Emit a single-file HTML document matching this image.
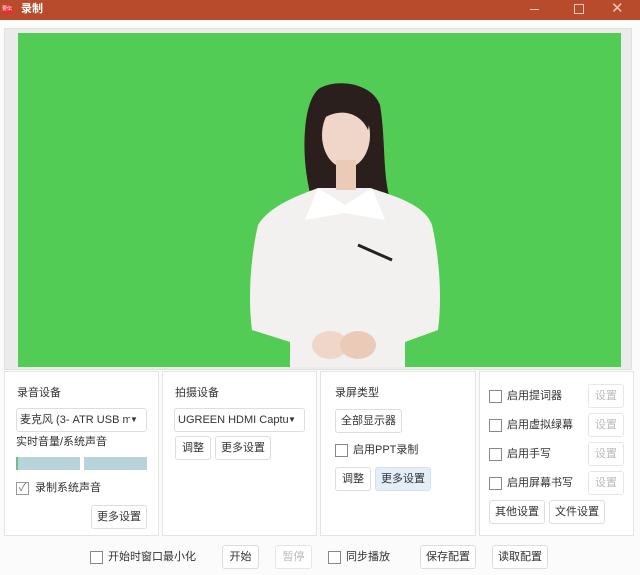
<!DOCTYPE html>
<html><head><meta charset="utf-8"><style>
*{margin:0;padding:0;box-sizing:border-box}
body{width:640px;height:575px;background:#fbfbfb;font-family:"Liberation Sans","Noto Sans CJK SC",sans-serif;font-size:11px;color:#333;position:relative;overflow:hidden}
.a{position:absolute}
.tb{left:0;top:0;width:640px;height:20px;background:#b84b2c}
.panel{position:absolute;top:371px;height:165px;border:1px solid #e4e4e4;background:#fff}
.btn{position:absolute;border:1px solid #ddd;border-radius:3px;background:#fff;height:24px;line-height:22px;text-align:center;font-size:11px;color:#333}
.dis{color:#bbb;border-color:#e6e6e6}
.cb{position:absolute;width:13px;height:13px;border:1px solid #888;background:#fff}
.t{position:absolute;font-size:11px;white-space:nowrap;line-height:13px}
</style></head><body>
<div class="a tb"></div>
<div class="a" style="left:2px;top:5px;width:11px;height:9px;background:#d33;font-size:5px;color:#fff;line-height:9px">要伝</div>
<div class="t" style="left:21px;top:3px;color:#fff;font-weight:bold;font-size:11px">录制</div>
<div class="a" style="left:530px;top:9px;width:9px;height:1px;background:#f3c9b8"></div>
<div class="a" style="left:574px;top:4px;width:10px;height:10px;border:1px solid #f3c9b8"></div>
<div class="t" style="left:611px;top:2px;color:#f3c9b8;font-size:15px">✕</div>

<div class="a" style="left:4px;top:28px;width:628px;height:342px;background:#ebebeb;border:1px solid #e0e0e0"></div>
<div class="a" style="left:18px;top:33px;width:603px;height:334px;background:#52cc55;overflow:hidden">
<svg width="603" height="334" viewBox="18 33 603 334">
<path d="M312 200 C300 160 302 100 320 88 C340 78 372 84 380 105 C386 140 382 180 392 205 L375 205 L315 205 Z" fill="#2a1f1c"/>
<path d="M258 225 C270 205 300 195 318 188 L370 188 C395 196 425 205 432 225 C440 260 442 300 438 330 L405 342 L405 367 L290 367 L290 342 L252 330 C248 300 250 260 258 225 Z" fill="#f3f1ef"/>
<path d="M318 188 L345 205 L372 188 L385 220 L345 213 L305 220 Z" fill="#fff"/>
<ellipse cx="346" cy="135" rx="24" ry="33" fill="#f0d6c8"/>
<rect x="336" y="160" width="20" height="30" fill="#eccab8"/>
<path d="M318 98 C330 88 365 90 372 110 L368 130 C360 112 340 108 324 118 Z" fill="#2a1f1c"/>
<path d="M358 245 L392 260" stroke="#222" stroke-width="3"/>
<ellipse cx="330" cy="345" rx="18" ry="14" fill="#f0d6c8"/>
<ellipse cx="358" cy="345" rx="18" ry="14" fill="#eccab8"/>
</svg></div>

<div class="panel" style="left:4px;width:155px"></div>
<div class="panel" style="left:162px;width:155px"></div>
<div class="panel" style="left:320px;width:156px"></div>
<div class="panel" style="left:479px;width:155px"></div>

<div class="t" style="left:17px;top:387px">录音设备</div>
<div class="btn" style="left:16px;top:408px;width:131px;text-align:left;padding-left:3px;overflow:hidden">麦克风 (3- ATR USB mic<span style="position:absolute;right:0;background:#fff;width:16px;font-size:8px">▼</span></div>
<div class="t" style="left:16px;top:436px">实时音量/系统声音</div>
<div class="a" style="left:16px;top:457px;width:64px;height:13px;background:#b9d3da;border-left:2px solid #6cbf8a"></div>
<div class="a" style="left:84px;top:457px;width:63px;height:13px;background:#b9d3da"></div>
<div class="cb" style="left:16px;top:482px;border-color:#999;font-size:11px;line-height:11px;color:#777;text-align:center">✓</div>
<div class="t" style="left:35px;top:482px">录制系统声音</div>
<div class="btn" style="left:91px;top:505px;width:56px">更多设置</div>

<div class="t" style="left:175px;top:387px">拍摄设备</div>
<div class="btn" style="left:174px;top:408px;width:131px;text-align:left;padding-left:3px;overflow:hidden">UGREEN HDMI Capture<span style="position:absolute;right:0;background:#fff;width:16px;font-size:8px">▼</span></div>
<div class="btn" style="left:175px;top:436px;width:36px">调整</div>
<div class="btn" style="left:215px;top:436px;width:56px">更多设置</div>

<div class="t" style="left:335px;top:387px">录屏类型</div>
<div class="btn" style="left:335px;top:409px;width:67px">全部显示器</div>
<div class="cb" style="left:335px;top:444px"></div>
<div class="t" style="left:353px;top:444px">启用PPT录制</div>
<div class="btn" style="left:335px;top:467px;width:36px">调整</div>
<div class="btn" style="left:375px;top:467px;width:56px;background:#e3eef9;border-color:#d5e2ee">更多设置</div>

<div class="cb" style="left:489px;top:390px"></div><div class="t" style="left:507px;top:390px">启用提词器</div>
<div class="btn dis" style="left:588px;top:384px;width:36px">设置</div>
<div class="cb" style="left:489px;top:419px"></div><div class="t" style="left:507px;top:419px">启用虚拟绿幕</div>
<div class="btn dis" style="left:588px;top:413px;width:36px">设置</div>
<div class="cb" style="left:489px;top:448px"></div><div class="t" style="left:507px;top:448px">启用手写</div>
<div class="btn dis" style="left:588px;top:442px;width:36px">设置</div>
<div class="cb" style="left:489px;top:477px"></div><div class="t" style="left:507px;top:477px">启用屏幕书写</div>
<div class="btn dis" style="left:588px;top:471px;width:36px">设置</div>
<div class="btn" style="left:489px;top:500px;width:56px">其他设置</div>
<div class="btn" style="left:549px;top:500px;width:56px">文件设置</div>

<div class="cb" style="left:90px;top:551px"></div><div class="t" style="left:108px;top:551px">开始时窗口最小化</div>
<div class="btn" style="left:222px;top:545px;width:37px">开始</div>
<div class="btn dis" style="left:275px;top:545px;width:37px">暂停</div>
<div class="cb" style="left:328px;top:551px"></div><div class="t" style="left:346px;top:551px">同步播放</div>
<div class="btn" style="left:420px;top:545px;width:56px">保存配置</div>
<div class="btn" style="left:492px;top:545px;width:56px">读取配置</div>
</body></html>
